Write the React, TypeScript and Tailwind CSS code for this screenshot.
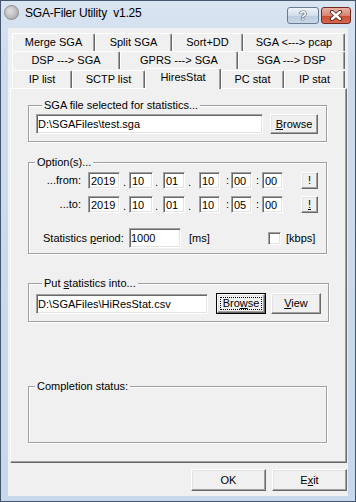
import React from "react";

const raised =
  "border border-t-white border-l-white border-r-[#696969] border-b-[#696969] shadow-[inset_-1px_-1px_0_#a0a0a0,inset_1px_1px_0_#e3e3e3]";
const sunken =
  "border border-t-[#a0a0a0] border-l-[#a0a0a0] border-r-white border-b-white shadow-[inset_1px_1px_0_#696969,inset_-1px_-1px_0_#e3e3e3]";

const row1 = [
  { label: "Merge SGA", w: "w-[83px]" },
  { label: "Split SGA", w: "w-[77px]" },
  { label: "Sort+DD", w: "w-[71px]" },
  { label: "SGA <---> pcap", w: "w-[102px]" },
];
const row2 = [
  { label: "DSP ---> SGA", w: "w-[108px]" },
  { label: "GPRS ---> SGA", w: "w-[118px]" },
  { label: "SGA ---> DSP", w: "w-[107px]" },
];
const row3 = [
  { label: "IP list", w: "w-[60px]" },
  { label: "SCTP list", w: "w-[73px]" },
  { label: "HiresStat", w: "w-[76px]", sel: true },
  { label: "PC stat", w: "w-[63px]" },
  { label: "IP stat", w: "w-[61px]" },
];

function Tab({ label, w, sel }: { label: string; w: string; sel?: boolean }) {
  return (
    <div
      className={`${w} ${
        sel ? "relative z-10 -mt-[1px] h-[21px] pb-[3px]" : "h-[18px]"
      } flex shrink-0 items-center justify-center whitespace-pre rounded-t-[2px] border-l border-r border-t border-l-white border-r-[#696969] border-t-white bg-[#f0f0f0] shadow-[inset_-1px_0_0_#a0a0a0] text-[11px]`}
    >
      {label}
    </div>
  );
}

function Btn({
  w,
  children,
  def,
  h = "h-[20px]",
}: {
  w: string;
  children: React.ReactNode;
  def?: boolean;
  h?: string;
}) {
  if (def) {
    return (
      <div className={`${w} ${h} shrink-0 border border-black`}>
        <div className={`${raised} flex h-full w-full items-center justify-center p-[2px]`}>
          <div className="flex h-full w-full items-center justify-center border border-dotted border-black text-[11px]">
            {children}
          </div>
        </div>
      </div>
    );
  }
  return (
    <div className={`${w} ${h} ${raised} flex shrink-0 items-center justify-center text-[11px]`}>
      {children}
    </div>
  );
}

function Field({ w, value, h = "h-[17px]", pl = "pl-[2px]" }: { w: string; value: string; h?: string; pl?: string }) {
  return (
    <input
      readOnly
      value={value}
      className={`${w} ${h} ${sunken} ${pl} shrink-0 bg-white text-[11px] leading-none text-black outline-none`}
    />
  );
}

function Group({
  legend,
  className,
  children,
}: {
  legend: React.ReactNode;
  className: string;
  children?: React.ReactNode;
}) {
  return (
    <fieldset
      className={`ml-[17px] w-[299px] border border-[#a0a0a0] shadow-[1px_1px_0_#fff,inset_1px_1px_0_#fff] ${className}`}
    >
      <legend className="relative ml-[6px] bg-[#f0f0f0] px-[2px] text-[11px] leading-[13px]">
        {legend}
      </legend>
      {children}
    </fieldset>
  );
}

function DateRow({ label, vals, ul, className }: { label: string; vals: string[]; ul?: boolean; className?: string }) {
  return (
    <div className={`flex h-[17px] items-center text-[11px] ${className ?? ""}`}>
      <div className="w-[52px] text-right">{label}</div>
      <div className="ml-[7px] flex items-center">
        <Field w="w-[32px]" value={vals[0]} />
        <span className="w-[9px] self-end pl-[3px] leading-[14px]">.</span>
        <Field w="w-[24px]" value={vals[1]} />
        <span className="w-[10px] self-end pl-[2px] leading-[14px]">.</span>
        <Field w="w-[22px]" value={vals[2]} />
        <span className="w-[14px] self-end pl-[3px] leading-[14px]">.</span>
        <Field w="w-[21px]" value={vals[3]} />
        <span className="w-[11px] pl-[6px]">:</span>
        <Field w="w-[21px]" value={vals[4]} />
        <span className="w-[10px] pl-[4px]">:</span>
        <Field w="w-[21px]" value={vals[5]} />
      </div>
      <div className="ml-[18px]">
        <Btn w="w-[17px]" h="h-[17px]">
          {ul ? <span className="underline underline-offset-1">!</span> : "!"}
        </Btn>
      </div>
    </div>
  );
}

function CloseGlyph() {
  return (
    <svg width="14" height="11" viewBox="0 0 14 11">
      <path d="M3 2 L11 9 M11 2 L3 9" stroke="#5a2118" strokeWidth="4.2" strokeLinecap="round" />
      <path d="M3 2 L11 9 M11 2 L3 9" stroke="#fff" strokeWidth="2.4" strokeLinecap="round" />
    </svg>
  );
}

export default function App() {
  return (
    <div className="flex h-[502px] w-[356px] flex-col border border-[#44576e] bg-[linear-gradient(to_bottom,#dae5f2,#cddbec_60px,#c7d8ec)] font-['Liberation_Sans',Arial,sans-serif] text-black">
      {/* title bar */}
      <div className="flex h-[27px] shrink-0 items-start">
        <div className="ml-[3px] mt-[4px] h-[15px] w-[15px] rounded-full border border-[#8e8e8e] bg-[radial-gradient(circle_at_40%_40%,#e2e2e2,#b9b9b9_60%,#9a9a9a)]" />
        <div className="ml-[6px] mt-[4px] whitespace-pre text-[12px] leading-[16px] tracking-[-0.2px] text-black">
          SGA-Filer Utility  v1.25
        </div>
        <div className="ml-auto mr-[4px] mt-[6px] flex gap-[2px]">
          <div className="flex h-[17px] w-[32px] items-center justify-center rounded-[3px] border border-[#6b7c91] bg-[linear-gradient(to_bottom,#eef3f9,#d3deeb_50%,#bccbdf_51%,#c9d6e6)] text-[13px] font-bold leading-none text-white [text-shadow:0_0_1px_#2e3a48,0_0_1px_#2e3a48,0_0_1px_#2e3a48]">
            ?
          </div>
          <div className="flex h-[17px] w-[30px] items-center justify-center rounded-[3px] border border-[#6e2a20] bg-[linear-gradient(to_bottom,#eab2a5,#d98470_50%,#c54a33_51%,#d46a50)]">
            <CloseGlyph />
          </div>
        </div>
      </div>

      {/* client */}
      <div className="mx-[7px] mb-[5px] flex flex-1 flex-col bg-[#f0f0f0] pt-[5px]">
        <div className="ml-[4px] flex h-[18px]">
          {row1.map((t) => (
            <Tab key={t.label} {...t} />
          ))}
        </div>
        <div className="ml-[4px] flex h-[18px]">
          {row2.map((t) => (
            <Tab key={t.label} {...t} />
          ))}
        </div>
        <div className="ml-[4px] flex h-[19px] items-start">
          {row3.map((t) => (
            <div key={t.label} className={t.sel ? "" : "mt-[1px]"}>
              <Tab {...t} />
            </div>
          ))}
        </div>

        {/* panel */}
        <div className="ml-[2px] flex h-[375px] w-[337px] flex-col border border-b-[#696969] border-l-white border-r-[#696969] border-t-white shadow-[inset_-1px_-1px_0_#a0a0a0]">
          <Group legend="SGA file selected for statistics..." className="mt-[10px] px-[7px] pb-[7px] pt-[2px]">
            <div className="flex items-center">
              <Field w="w-[227px]" h="h-[20px]" pl="pl-[1px]" value="D:\SGAFiles\test.sga" />
              <div className="ml-[7px]">
                <Btn w="w-[48px]">
                  <span>
                    <span className="underline underline-offset-1">B</span>rowse
                  </span>
                </Btn>
              </div>
            </div>
          </Group>

          <Group legend="Option(s)..." className="mt-[14px] pb-[5px] pt-[3px]">
            <DateRow label="...from:" vals={["2019", "10", "01", "10", "00", "00"]} />
            <DateRow className="mt-[7px]" label="...to:" vals={["2019", "10", "01", "10", "05", "00"]} ul />
            <div className="mt-[15px] flex h-[20px] items-center text-[11px]">
              <div className="ml-[14px] w-[86px]">
                Statistics <span className="underline underline-offset-1">p</span>eriod:
              </div>
              <Field w="w-[52px]" h="h-[20px]" pl="pl-[1px]" value="1000" />
              <div className="ml-[8px] w-[79px]">[ms]</div>
              <div className={`h-[13px] w-[13px] shrink-0 bg-white ${sunken}`} />
              <div className="ml-[5px]">[kbps]</div>
            </div>
          </Group>

          <Group
            legend={
              <span>
                Put <span className="underline underline-offset-1">s</span>tatistics into...
              </span>
            }
            className="mt-[23px] px-[7px] pb-[7px] pt-[3px]"
          >
            <div className="flex items-center">
              <Field w="w-[172px]" h="h-[20px]" pl="pl-[1px]" value="D:\SGAFiles\HiResStat.csv" />
              <div className="ml-[8px]">
                <Btn w="w-[50px]" h="h-[21px]" def>
                  <span>
                    Bro<span className="underline underline-offset-1">w</span>se
                  </span>
                </Btn>
              </div>
              <div className="ml-[5px]">
                <Btn w="w-[50px]" h="h-[21px]">
                  <span>
                    <span className="underline underline-offset-1">V</span>iew
                  </span>
                </Btn>
              </div>
            </div>
          </Group>

          <Group legend="Completion status:" className="mt-[58px] h-[63px]" />
        </div>

        {/* bottom buttons */}
        <div className="mt-[6px] flex justify-end gap-[6px] pr-[1px]">
          <Btn w="w-[75px]" h="h-[22px]">
            OK
          </Btn>
          <Btn w="w-[75px]" h="h-[22px]">
            <span>
              E<span className="underline underline-offset-1">x</span>it
            </span>
          </Btn>
        </div>
      </div>
    </div>
  );
}
